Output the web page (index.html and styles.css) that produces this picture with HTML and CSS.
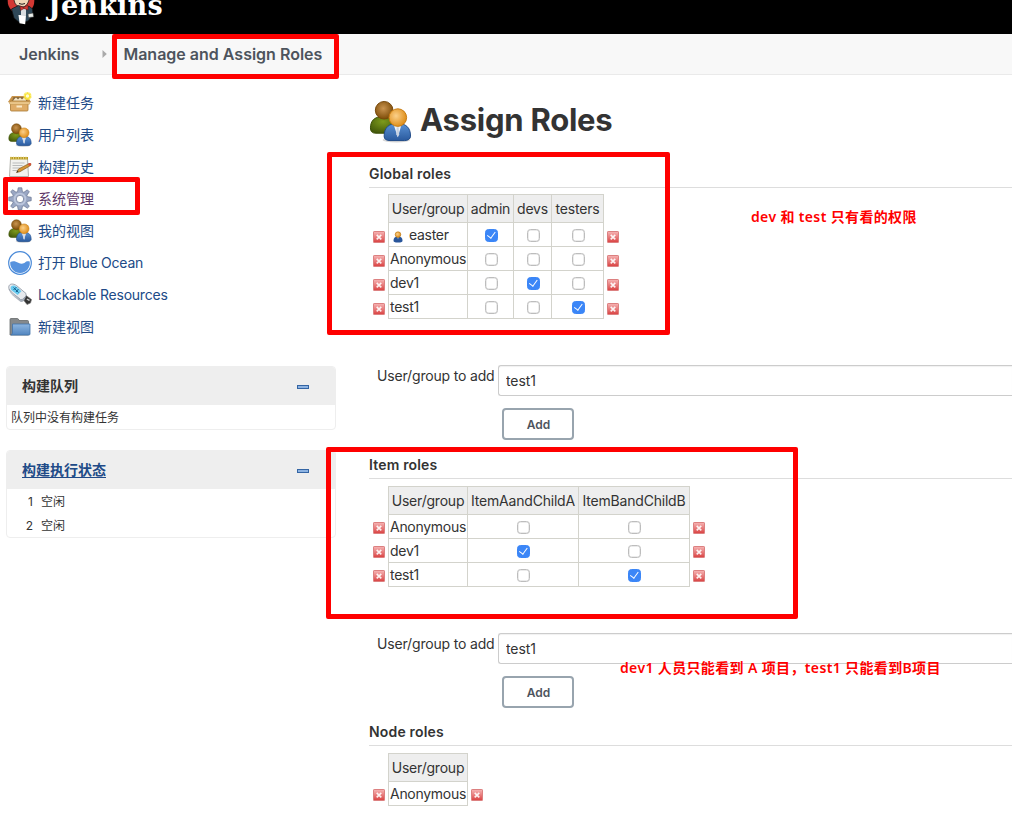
FILE: index.html
```html
<!DOCTYPE html>
<html lang="zh-CN">
<head>
<meta charset="utf-8">
<title>Assign Roles [Jenkins]</title>
<link rel="stylesheet" href="styles.css">
</head>
<body>
<svg class="defs" width="0" height="0" aria-hidden="true">
  <defs>
    <linearGradient id="gBlue" x1="0" y1="0" x2="0" y2="1"><stop offset="0" stop-color="#5b93d6"/><stop offset="1" stop-color="#2a5a9e"/></linearGradient>
    <linearGradient id="gFolder" x1="0" y1="0" x2="0" y2="1"><stop offset="0" stop-color="#8db5e0"/><stop offset="1" stop-color="#5286c0"/></linearGradient>
    <linearGradient id="gRed" x1="0" y1="0" x2="0" y2="1"><stop offset="0" stop-color="#f6b5b5"/><stop offset=".5" stop-color="#e87c7c"/><stop offset="1" stop-color="#d94040"/></linearGradient>
    <linearGradient id="gUsb" x1="0" y1="0" x2="1" y2="1"><stop offset="0" stop-color="#dfe3e8"/><stop offset="1" stop-color="#9aa3b0"/></linearGradient>
    <radialGradient id="gGreen" cx=".5" cy=".3" r=".7"><stop offset="0" stop-color="#7d9a1c"/><stop offset="1" stop-color="#44590a"/></radialGradient>
    <radialGradient id="gBrown" cx=".45" cy=".4" r=".6"><stop offset="0" stop-color="#c99450"/><stop offset="1" stop-color="#7d4c08"/></radialGradient>
    <radialGradient id="gGold" cx=".4" cy=".4" r=".65"><stop offset="0" stop-color="#fbd08a"/><stop offset="1" stop-color="#dd8a12"/></radialGradient>
  </defs>
  <symbol id="users" viewBox="0 0 44 44">
    <ellipse cx="28" cy="41" rx="14" ry="2.500" fill="#bbb" opacity=".6"/>
    <path d="M1.500 28.500C1.500 21 6 17 14 17s13 5 13 12c0 3-2 5-5 5H7c-4 0-5.500-2-5.500-5.500z" fill="url(#gGreen)" stroke="#3c5008"/>
    <circle cx="15.500" cy="10.500" r="9" fill="url(#gBrown)" stroke="#77480a"/>
    <path d="M15.500 37c0-9 5-13 13.500-13s13.500 4 13.500 13c0 3-3 4.500-6 4.500h-15c-4 0-6-1.500-6-4.500z" fill="url(#gBlue)" stroke="#204a87"/>
    <path d="M25.500 26l4 12 3.500-12z" fill="#f1f4f8"/>
    <path d="M28.300 28h2l.6 7-1.400 3-1.600-3z" fill="#c7d2e2"/>
    <circle cx="29.500" cy="18" r="9" fill="url(#gGold)" stroke="#c77b10"/>
  </symbol>
  <symbol id="person" viewBox="0 0 12 12">
    <path d="M1.500 9.500C1.500 7 3 5.500 6 5.500s4.500 1.500 4.500 4c0 1.500-1 2-4.500 2s-4.500-.5-4.500-2z" fill="#28559a"/>
    <path d="M5.300 6h1.400L6 8.500z" fill="#bcd"/>
    <circle cx="6" cy="3.600" r="2.800" fill="url(#gGold)" stroke="#b97310" stroke-width=".6"/>
  </symbol>
  <symbol id="remove" viewBox="0 0 12 12">
    <rect x=".5" y=".5" width="11" height="11" rx=".6" fill="url(#gRed)" stroke="#dc8080"/>
    <path d="M3.700 3.900l4.600 4.400M8.300 3.900L3.700 8.300" stroke="#fff" stroke-opacity=".9" stroke-width="1.600" fill="none"/>
  </symbol>
  <symbol id="box" viewBox="0 0 24 24">
    <path d="M4 5h15l4 6H0z" fill="#c99349"/><path d="M5.500 6h12l1.500 4H4z" fill="#8b6a3c"/>
    <path d="M6 8.500l2-2 2 2 2-2 2 2 2-2 2 2v1.500H5z" fill="#f5e8cb"/>
    <path d="M2.500 10h17.500v9q0 1-1 1H3.500q-1 0-1-1z" fill="#dfac67" stroke="#a87832" stroke-width=".8"/>
    <path d="M.8 10.800h21.500l-1 2.500H2z" fill="#f0cd92" stroke="#b98a45" stroke-width=".5"/><rect x="8.500" y="14.500" width="5.500" height="2" fill="#fae9c8"/>
    <circle cx="19.500" cy="5" r="4" fill="#fbe94a" opacity=".6"/>
    <path d="M19.500 1l1.200 1.800 2.200-.1-.7 2.100 1.500 1.500-2.100.8-.4 2-1.700-1.100-1.900 1.100-.2-2.100-2-.8 1.500-1.500-.6-2 2.100.1z" fill="#f9e33a"/><circle cx="19.500" cy="5" r="1.700" fill="#fffbd0"/>
  </symbol>
  <symbol id="note" viewBox="0 0 24 24">
    <path d="M2.500 3.500h17l1 18H1.500z" fill="#f2f2ef" stroke="#a9a9a4" stroke-width=".9"/>
    <path d="M2 2h18v2.500H2z" fill="#b99b24"/><path d="M3 1.500v3M5.500 1.500v3M8 1.500v3M10.500 1.500v3M13 1.500v3M15.500 1.500v3M18 1.500v3" stroke="#eadb8c" stroke-width=".8"/>
    <path d="M4.500 8h12M4.500 10.500h10M4.500 13h8M4.500 15.500h6" stroke="#b9bbbb" stroke-width="1"/>
    <path d="M8.500 17.500l2-3.500 10.500-5.500 2 .3-.4 1.700L12 16.700z" fill="#d49537" stroke="#7a5018" stroke-width=".6"/>
    <path d="M8.500 17.500l1-1.700 1 1.200z" fill="#222"/><path d="M20 9l1.500-1 1.700.5-.4 1.600-1.500.8z" fill="#d84b3c"/>
  </symbol>
  <symbol id="gear" viewBox="0 0 24 24">
    <path fill-rule="evenodd" d="M10.200.8h3.600l.6 3.900 1.500.6 3.400-2.500 2 2-2.400 3.400.6 1.500 3.700.6v3.400l-3.800.7-.6 1.500 2.500 3.400-2 1.900-3.400-2.400-1.500.6-.6 3.300h-3.600l-.6-3.500-1.500-.6-3.400 2.500-2-2 2.400-3.300-.6-1.500-3.700-.6v-3.500l3.800-.6.6-1.500-2.500-3.400 2-1.900 3.300 2.400 1.600-.6zM12 8.300a3.700 3.700 0 1 0 0 7.400a3.700 3.700 0 0 0 0-7.400z" fill="#9aa7c4" stroke="#66728f" stroke-width=".7"/>
    <circle cx="12" cy="12" r="5.400" fill="none" stroke="#bcc6dc" stroke-width="1.800"/>
  </symbol>
  <symbol id="ocean" viewBox="0 0 24 24">
    <circle cx="12" cy="12" r="11.300" fill="#fff" stroke="#4a8ad8" stroke-width="1.200"/>
    <path d="M2.300 11c3-1.500 5.500-.5 8 .8s5.500 1 6.700-.2c1-1 2.500-1.600 4.700-1A9.800 9.800 0 1 1 2.300 11z" fill="#5793de"/>
  </symbol>
  <symbol id="usb" viewBox="0 0 24 24">
    <path d="M13.500 14.500l4-2.500 6 4.500-1 3.500-3.500 1.500z" fill="#333" stroke="#777" stroke-width=".7"/><path d="M19.500 15.500l2.500 1.500-1 1-2.500-1.500z" fill="#ccc"/>
    <path d="M.8 3.500C1.500.5 5 .3 8.500 2.500l9.500 8q.8 2-1.500 4.500t-4 1.500l-7-5.500C2 8 .3 6 .8 3.500z" fill="#e6e9ed" stroke="#8a93a0" stroke-width=".8"/>
    <path d="M1 6q1 4 4.500 7l7 5.500q2 .5 3.500-1l2-4.500-2 2q-2 2-3.500 1.500l-7-5.500Q2 8.500 1 6z" fill="url(#gUsb)" stroke="#8a93a0" stroke-width=".4"/>
    <path d="M3 3.500C5 1.800 7 2.500 9 4l4.500 4.200-3.800 3.800-6-4.500C2.500 6 2.200 4.700 3 3.500z" fill="#6acbf0"/>
    <path d="M5.500 4.500l5 5M5.500 7l3-3M8 9l2.500-3" stroke="#14628f" stroke-width="1"/>
  </symbol>
  <symbol id="folder" viewBox="0 0 24 24">
    <path d="M2 4.500q0-1 1-1h6.500q1 0 1.500 2h8.500q1 0 1 1V20H2z" fill="#85898c" stroke="#66696b" stroke-width=".8"/>
    <path d="M4.500 9h17.500v10q0 1-1 1H3q1.200-.5 1.500-2z" fill="url(#gFolder)" stroke="#4273aa" stroke-width=".8"/>
  </symbol>
  <symbol id="minus" viewBox="0 0 12 4"><rect x=".5" y=".5" width="11" height="3" fill="#8db3e2" stroke="#3465a4"/></symbol>
</svg>

<header class="header">
  <svg class="butler" viewBox="0 0 28 38">
    <circle cx="14" cy="14" r="13.300" fill="#d33833"/>
    <path d="M7 4h15v9q-2 7-7 7-7 0-8-7z" fill="#f0d6b7" stroke="#231f20" stroke-width=".8"/>
    <path d="M12 16.500q3 1.500 6 0" stroke="#231f20" fill="none"/>
    <path d="M4.500 22l7-3.500 5 2 6-1 3 2.500.5 6-5 6-8 2-6-5z" fill="#2f4858" stroke="#111" stroke-width=".7"/>
    <path d="M14 21l3 1 2-1v7h-5z" fill="#d9dde0"/>
    <path d="M13 19l3.500 1.500L21 18v5l-4-1.500-3.500 2z" fill="#d33833" stroke="#5c1515" stroke-width=".5"/>
    <path d="M11.500 28l7.500.3-.8 9-5.700-1z" fill="#fff"/>
    <path d="M21 27l5-1 .7 4-5.200.5z" fill="#e9ede9" stroke="#333" stroke-width=".5"/>
  </svg>
  <span class="wordmark">Jenkins</span>
</header>

<nav class="breadcrumbs">
  <span class="crumb">Jenkins</span>
  <svg class="crumb-arrow" viewBox="0 0 5 8"><path d="M.5 0L4.800 4 .5 8z" fill="#aaa"/></svg>
  <span class="crumb crumb-page">Manage and Assign Roles</span>
</nav>

<div class="page">
  <aside class="side">
    <ul class="tasks">
      <li><svg><use href="#box"/></svg><a>新建任务</a></li>
      <li><svg><use href="#users"/></svg><a>用户列表</a></li>
      <li><svg><use href="#note"/></svg><a>构建历史</a></li>
      <li><svg><use href="#gear"/></svg><a class="visited">系统管理</a></li>
      <li><svg><use href="#users"/></svg><a>我的视图</a></li>
      <li><svg><use href="#ocean"/></svg><a class="latin">打开 Blue Ocean</a></li>
      <li><svg><use href="#usb"/></svg><a class="latin">Lockable Resources</a></li>
      <li><svg><use href="#folder"/></svg><a>新建视图</a></li>
    </ul>
    <section class="pane">
      <h2 class="pane-head"><span>构建队列</span><svg><use href="#minus"/></svg></h2>
      <p class="pane-empty">队列中没有构建任务</p>
    </section>
    <section class="pane">
      <h2 class="pane-head"><a>构建执行状态</a><svg><use href="#minus"/></svg></h2>
      <ol class="executors">
        <li><span class="num">1</span><span>空闲</span></li>
        <li><span class="num">2</span><span>空闲</span></li>
      </ol>
    </section>
  </aside>

  <main class="main">
    <div class="title"><svg><use href="#users"/></svg><h1>Assign Roles</h1></div>

    <section class="roles">
      <h3>Global roles</h3>
      <table class="matrix">
        <colgroup><col class="c-x"><col class="c-user"><col class="c-admin"><col class="c-devs"><col class="c-testers"><col class="c-end"></colgroup>
        <tr><td class="x"></td><th>User/group</th><th>admin</th><th>devs</th><th>testers</th><td class="x"></td></tr>
        <tr><td class="x"><svg><use href="#remove"/></svg></td><td class="who"><svg class="who-icon"><use href="#person"/></svg>easter</td><td><i class="check on"></i></td><td><i class="check"></i></td><td><i class="check"></i></td><td class="x"><svg><use href="#remove"/></svg></td></tr>
        <tr><td class="x"><svg><use href="#remove"/></svg></td><td class="who">Anonymous</td><td><i class="check"></i></td><td><i class="check"></i></td><td><i class="check"></i></td><td class="x"><svg><use href="#remove"/></svg></td></tr>
        <tr><td class="x"><svg><use href="#remove"/></svg></td><td class="who">dev1</td><td><i class="check"></i></td><td><i class="check on"></i></td><td><i class="check"></i></td><td class="x"><svg><use href="#remove"/></svg></td></tr>
        <tr><td class="x"><svg><use href="#remove"/></svg></td><td class="who">test1</td><td><i class="check"></i></td><td><i class="check"></i></td><td><i class="check on"></i></td><td class="x"><svg><use href="#remove"/></svg></td></tr>
      </table>
      <div class="add"><label>User/group to add</label><input type="text" value="test1"></div>
      <button class="btn">Add</button>
    </section>

    <section class="roles">
      <h3>Item roles</h3>
      <table class="matrix low">
        <colgroup><col class="c-x"><col class="c-user"><col class="c-item"><col class="c-item"><col class="c-end"></colgroup>
        <tr><td class="x"></td><th>User/group</th><th>ItemAandChildA</th><th>ItemBandChildB</th><td class="x"></td></tr>
        <tr><td class="x"><svg><use href="#remove"/></svg></td><td class="who">Anonymous</td><td><i class="check"></i></td><td><i class="check"></i></td><td class="x"><svg><use href="#remove"/></svg></td></tr>
        <tr><td class="x"><svg><use href="#remove"/></svg></td><td class="who">dev1</td><td><i class="check on"></i></td><td><i class="check"></i></td><td class="x"><svg><use href="#remove"/></svg></td></tr>
        <tr><td class="x"><svg><use href="#remove"/></svg></td><td class="who">test1</td><td><i class="check"></i></td><td><i class="check on"></i></td><td class="x"><svg><use href="#remove"/></svg></td></tr>
      </table>
      <div class="add"><label>User/group to add</label><input type="text" value="test1"></div>
      <button class="btn">Add</button>
    </section>

    <section class="roles">
      <h3>Node roles</h3>
      <table class="matrix low">
        <colgroup><col class="c-x"><col class="c-user"><col class="c-end"></colgroup>
        <tr><td class="x"></td><th>User/group</th><td class="x"></td></tr>
        <tr><td class="x"><svg><use href="#remove"/></svg></td><td class="who">Anonymous</td><td class="x"><svg><use href="#remove"/></svg></td></tr>
      </table>
    </section>
  </main>
</div>

<div class="mark mark-crumb"></div>
<div class="mark mark-manage"></div>
<div class="mark mark-global"></div>
<div class="mark mark-item"></div>
<p class="note note-global">dev 和 test 只有看的权限</p>
<p class="note note-item">dev1 人员只能看到 A 项目，test1 只能看到B项目</p>
</body>
</html>
```

FILE: styles.css
```css
* { box-sizing: border-box; }
body {
  margin: 0;
  width: 1012px;
  height: 829px;
  position: relative;
  overflow: hidden;
  background: #fff;
  color: #333;
  font: 14px/20px Inter, "Noto Sans CJK SC", sans-serif;
}
h1, h2, h3, p, ul, ol { margin: 0; padding: 0; list-style: none; }
svg { display: block; flex: none; }
.defs { position: absolute; }

.header { display: flex; height: 34px; padding-left: 7px; background: #000; overflow: hidden; }
.butler { width: 28px; height: 38px; margin-top: -13px; }
.wordmark {
  margin: -11px 0 0 13px;
  color: #fff;
  font: bold 27px/34px "DejaVu Serif", serif;
  letter-spacing: .2px;
}
.breadcrumbs {
  display: flex;
  align-items: center;
  height: 41px;
  padding: 0 0 1px 19px;
  background: #f8f8f8;
  border-bottom: 1px solid #eaeaea;
  color: #4d545d;
  font-size: 16px;
  font-weight: 600;
}
.crumb-arrow { width: 5px; height: 8px; margin: 0 16px 0 23px; }

.page { display: flex; height: 754px; }
.side { width: 336px; flex: none; padding: 12px 0 0 6px; }
.tasks { height: 279px; }
.tasks li { display: flex; align-items: center; height: 32px; padding-left: 2px; }
.tasks svg { width: 24px; height: 24px; margin-right: 6px; }
.tasks a { color: #204a87; }
.tasks a.latin { letter-spacing: -.22px; }
.tasks a.visited { color: #5c3566; }

.pane { margin-bottom: 20px; border: 1px solid #eee; border-radius: 4px; overflow: hidden; font-size: 12px; }
.pane-head {
  display: flex;
  align-items: center;
  justify-content: space-between;
  height: 38px;
  padding: 0 26px 0 15px;
  background: #eee;
  font-size: 14px;
  font-weight: 600;
}
.pane-head a { color: #204a87; text-decoration: underline; text-underline-offset: 2px; }
.pane-head svg { width: 12px; height: 4px; margin-top: 2px; }
.pane-empty { height: 24px; padding-left: 4px; line-height: 25px; }
.executors li { display: flex; height: 24px; line-height: 25px; }
.num { width: 26px; margin-right: 8px; text-align: right; }

.main { flex: 1; min-width: 0; padding-left: 33px; }
.title { display: flex; height: 87px; padding-top: 25px; }
.title svg { width: 43px; height: 43px; margin-right: 9px; }
h1 { margin-left: -1px; font-size: 31px; line-height: 40px; font-weight: 700; letter-spacing: -.25px; }
.roles { margin-bottom: 13px; }
.roles h3 { height: 26px; border-bottom: 1px solid #ddd; font-size: 14px; line-height: 24px; font-weight: 600; letter-spacing: .17px; }
.roles + .roles { margin-bottom: 12px; }

.matrix { margin-top: 6px; border-spacing: 0; table-layout: fixed; width: 10px; letter-spacing: -.21px; }
.matrix.low { margin-top: 7px; }
.c-x { width: 19px; }
.c-user { width: 80px; }
.c-admin { width: 46px; }
.c-devs { width: 38px; }
.c-testers { width: 52px; }
.c-item { width: 111px; }
.c-end { width: 20px; }
.matrix th { height: 29px; padding: 1px 0 0; border: solid #d3d3cc; border-width: 1px 1px 1px 0; background: #eee; font-weight: 400; white-space: nowrap; }
.matrix td { height: 24px; padding: 0; border: solid #d3d3cc; border-width: 0 1px 1px 0; line-height: 20px; }
.matrix th:nth-child(2), .matrix .who { border-left-width: 1px; }
.matrix td.x { border: 0; }
.matrix .x svg { width: 12px; height: 12px; margin: 4px 0 0 4px; }
.matrix.low .x svg { margin-top: 2px; }
.matrix .x:last-child svg { margin-left: 3px; }
.matrix .who { padding: 1px 0 0 1px; white-space: nowrap; letter-spacing: -.28px; }
.who-icon { display: inline-block; width: 12px; height: 12px; margin: 0 5px 0 2px; vertical-align: -3px; }
.check { display: block; position: relative; width: 13px; height: 13px; margin: 1px auto 0; left: .5px; border: 1px solid #bdbdbd; border-radius: 3.500px; background: #fff; box-shadow: inset 0 0 0 .5px #d8d8d8; }
.check.on { display: grid; place-items: center; border-color: #3b86f7; background: #3b86f7; box-shadow: none; }
.check.on::after { content: ""; box-sizing: border-box; width: 4.500px; height: 7.500px; margin-top: -2px; border: solid #fff; border-width: 0 1.600px 1.600px 0; transform: rotate(36deg); }

.add { display: flex; height: 31px; margin-top: 46px; padding-left: 8px; }
.add label { width: 121px; line-height: 22px; letter-spacing: -.17px; white-space: nowrap; }
.add input { flex: 1; min-width: 0; padding: 0 7px; border: 1px solid #ccc; border-right: 0; border-radius: 3px 0 0 3px; color: #333; font: inherit; letter-spacing: -.1px; box-shadow: inset 0 1px 1px rgba(0, 0, 0, .06); }
.btn { display: block; width: 72px; height: 32px; margin: 12px 0 0 133px; padding: 1px 0 0 1px; border: 2px solid #98a4ae; border-radius: 4px; background: #fff; color: #4d545d; font: 600 12px/28px Inter, sans-serif; }
.roles + .roles .btn { padding-top: 0; line-height: 27px; }

/* annotation overlay */
.mark { position: absolute; border: 5px solid #f00; border-radius: 2px; }
.mark-crumb { left: 112px; top: 34px; width: 227px; height: 45px; }
.mark-manage { left: 3px; top: 177px; width: 137px; height: 38px; }
.mark-global { left: 327px; top: 152px; width: 343px; height: 183px; }
.mark-item { left: 326px; top: 447px; width: 472px; height: 172px; }
.note { position: absolute; color: #f00; font: 600 14px/20px "Noto Sans", "Noto Sans CJK SC", sans-serif; white-space: nowrap; letter-spacing: .36px; }
.note-global { left: 751px; top: 207px; }
.note-item { left: 620px; top: 658px; }
```
